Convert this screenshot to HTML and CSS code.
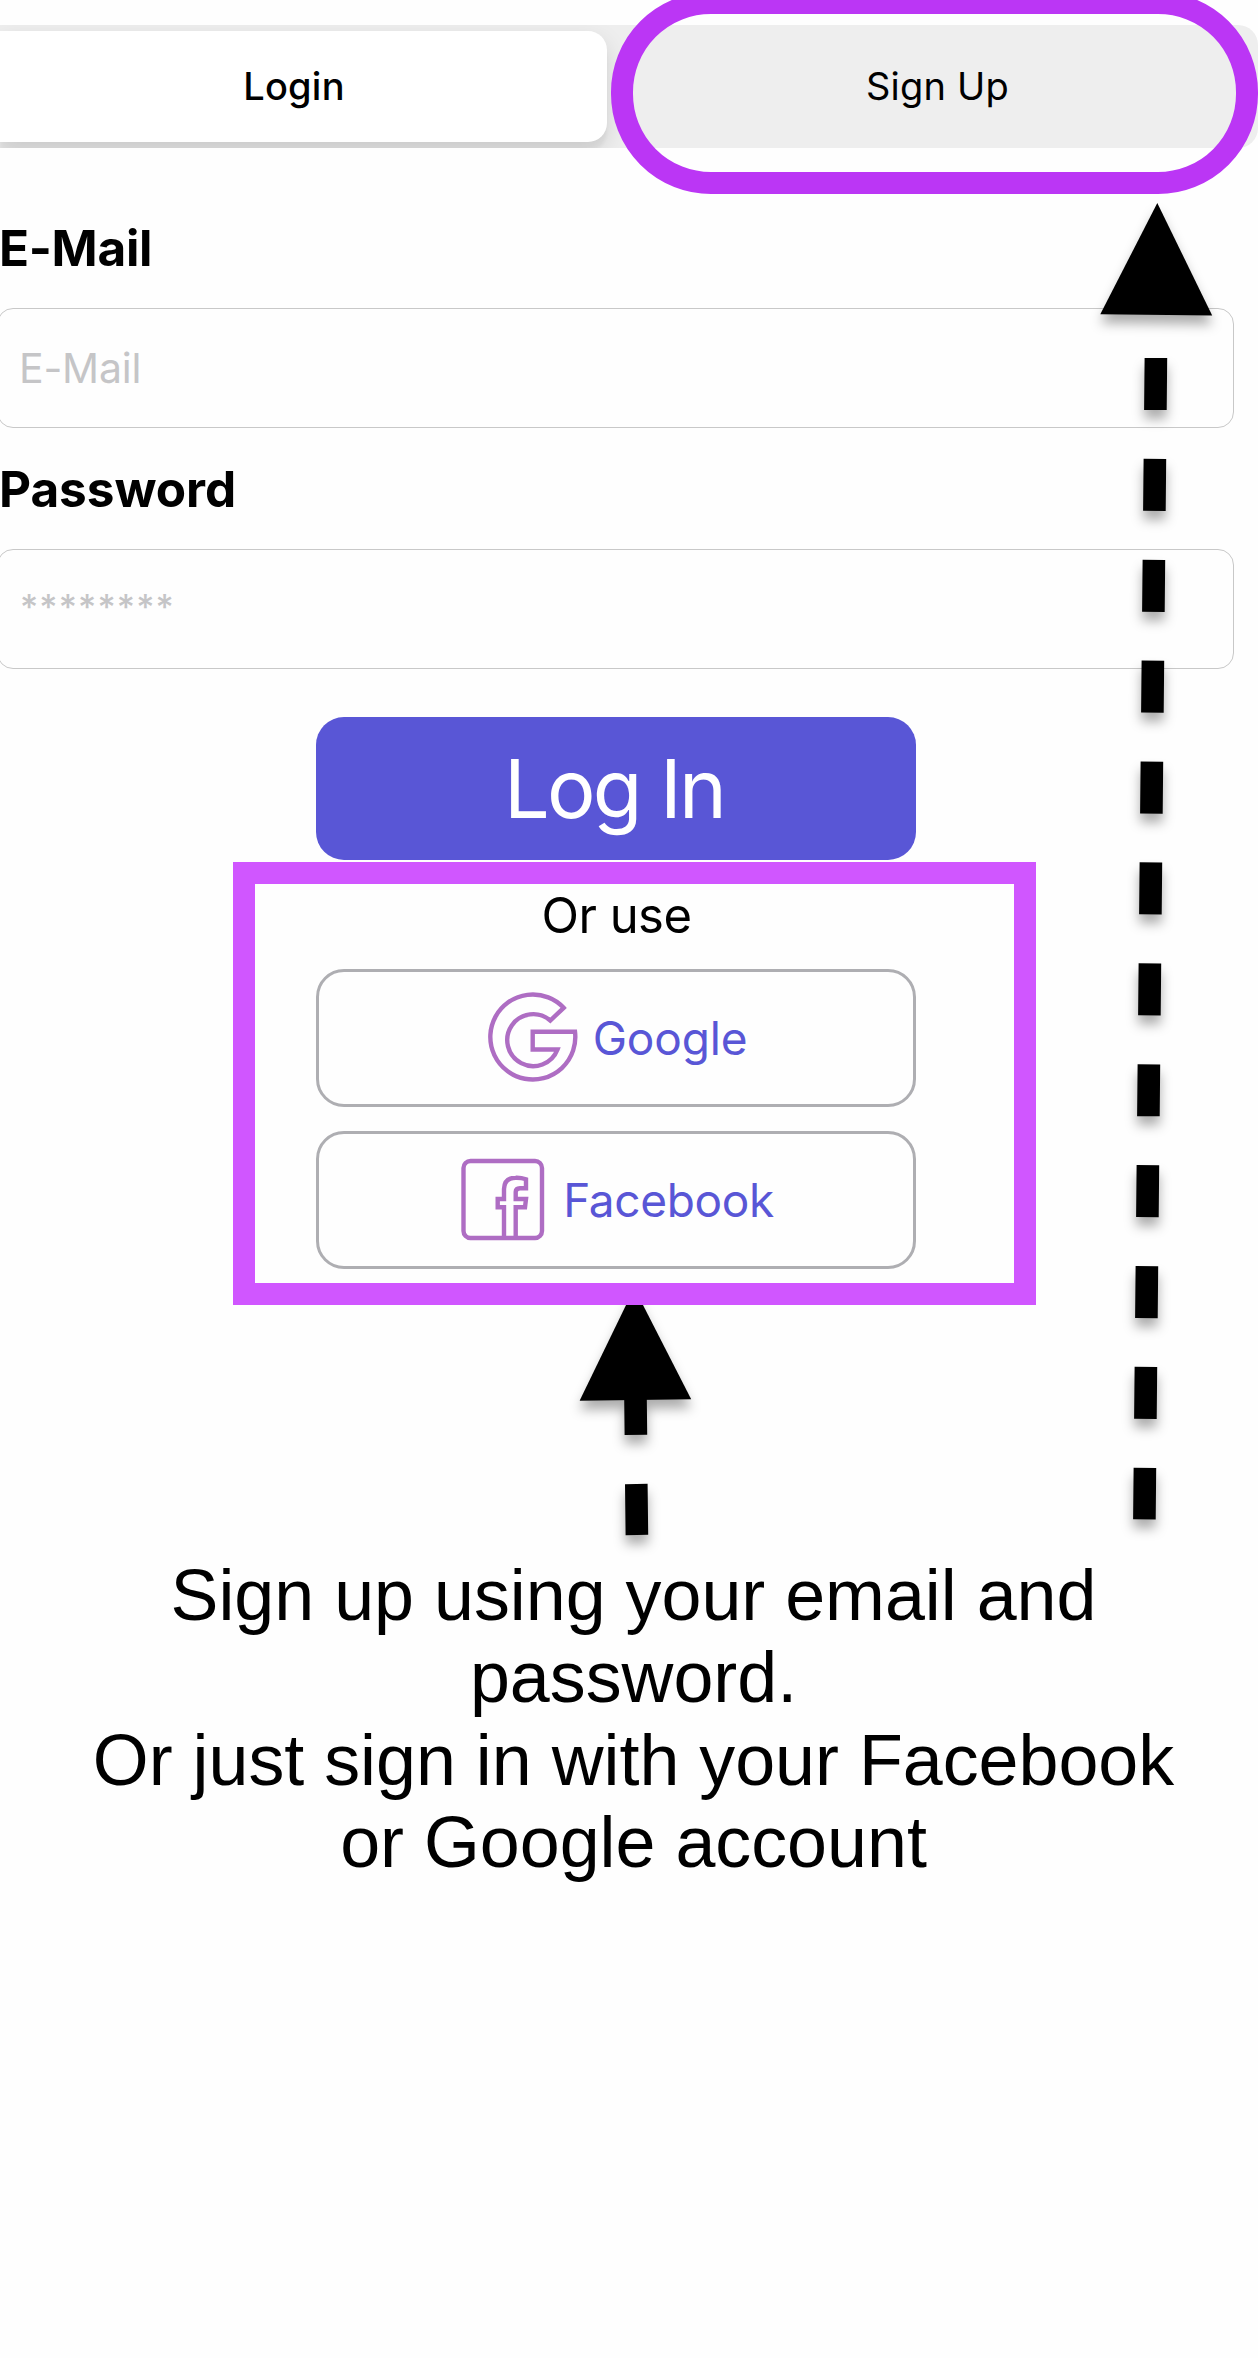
FILE: index.html
```html
<!DOCTYPE html>
<html lang="en">
<head>
<meta charset="utf-8">
<title>Login</title>
<link rel="stylesheet" href="styles.css">
</head>
<body>
<main class="page">
  <nav class="tabs">
    <div class="tab tab-active">Login</div>
    <div class="tab tab-signup">Sign Up</div>
  </nav>

  <form class="form">
    <label class="label label-email">E-Mail</label>
    <div class="field"><span class="placeholder">E-Mail</span></div>
    <label class="label label-password">Password</label>
    <div class="field"><span class="placeholder stars">********</span></div>
  </form>

  <section class="actions">
    <div class="login">Log In</div>
    <p class="or">Or use</p>
    <div class="social">
      <svg class="icon" viewBox="0 0 96 96"><path d="M78.700 17.800A42.500 42.500 0 1 0 90 41.800H47.700V59.500H72.500A26 26 0 1 1 65.300 30.500Z"/></svg>
      <span class="google">Google</span>
    </div>
    <div class="social social-facebook">
      <svg class="icon" viewBox="0 0 96 96"><rect x="8.500" y="9" width="78.500" height="77" rx="7"/><path d="M49 85V55.300H42.700V47H49V37Q49.500 25.700 60.700 25.700Q66 25.500 71 27.300V36.300H65Q60.700 36.500 60.700 40V47H71L70 55.300H60.700V85"/></svg>
      <span class="facebook">Facebook</span>
    </div>
  </section>

  <p class="caption">Sign up using your email and password.<br>Or just sign in with your Facebook or Google account</p>

  <svg class="arrows" viewBox="0 0 1258 2358">
    <g class="arrow">
      <path d="M1157.300 203L1212.200 315.500L1100.300 314.300Z"/>
      <path class="shaft shaft-long" d="M1155.900 358L1144.400 1519.300"/>
    </g>
    <g class="arrow">
      <path d="M634.300 1288L691.200 1399.300L579.600 1400.800Z"/>
      <path class="shaft" d="M635.400 1390L635.900 1434.800M636.300 1484L636.900 1535"/>
    </g>
  </svg>
  <div class="ring"></div>
  <div class="frame"></div>
</main>
</body>
</html>
```
FILE: styles.css
```css
* { box-sizing: border-box; }

body {
  margin: 0;
  background: #fefefe;
  color: #000;
  font-family: Inter, "Liberation Sans", sans-serif;
}

.page {
  position: relative;
  width: 1258px;
  height: 2358px;
  padding-top: 25px;
  overflow: hidden;
}

.tabs {
  display: flex;
  height: 123px;
  padding: 6px 6px 6px 0;
  background: #eee;
  border-radius: 0 20px 20px 0;
  overflow: hidden;
}

.tab {
  display: flex;
  align-items: center;
  justify-content: center;
  padding-bottom: 1px;
  font-size: 38px;
  letter-spacing: 0.2px;
}

.tab-active {
  width: 607px;
  padding-right: 19px;
  font-weight: 500;
  background: #fff;
  border-radius: 0 19px 19px 0;
  box-shadow: 0 9px 24px rgba(0, 0, 0, 0.12), 0 9px 3px rgba(0, 0, 0, 0.04);
}

.tab-signup { flex: 1; padding-left: 16px; }

.label {
  display: block;
  height: 60px;
  font-size: 49.5px;
  font-weight: 700;
  line-height: 60px;
}

.label-email { margin: 70px 0 30px -1px; letter-spacing: -0.3px; }
.label-password { margin: 31px 0 30px -1px; letter-spacing: -0.05px; }

.field {
  display: flex;
  align-items: center;
  width: 1237px;
  height: 120px;
  margin-left: -3px;
  padding-left: 21px;
  background: #fefefe;
  border: 1px solid #c8c8c8;
  border-radius: 16px;
}

.placeholder { color: #c5c5c7; font-size: 41px; letter-spacing: -0.2px; }
.stars { padding: 0 0 5px 1px; font-size: 35px; font-weight: 500; letter-spacing: 1.15px; }

.actions {
  display: flex;
  flex-direction: column;
  width: 600px;
  margin: 48px 0 0 316px;
}

.login {
  height: 143px;
  padding-right: 4px;
  border-radius: 28px;
  background: #5956d6;
  color: #fff;
  font-size: 81px;
  letter-spacing: -2.72px;
  line-height: 145px;
  text-align: center;
}

.or {
  margin: 26px 0 23px;
  padding-left: 1px;
  font-size: 49px;
  letter-spacing: -0.5px;
  line-height: 60px;
  text-align: center;
}

.social {
  display: flex;
  align-items: center;
  justify-content: center;
  gap: 12px;
  height: 138px;
  border: 3px solid #aeaeb2;
  border-radius: 28px;
  color: #5956d6;
  font-size: 46px;
}

.social-facebook { margin-top: 24px; padding-right: 3px; }
.google { letter-spacing: -0.17px; }
.facebook { letter-spacing: -0.36px; }

.icon {
  width: 96px;
  height: 96px;
  fill: none;
  stroke: #ae6dc3;
  stroke-width: 4.4;
}

.caption {
  width: 1102px;
  margin: 284.5px 0 0 82.5px;
  font-family: "Liberation Sans", Arial, sans-serif;
  font-size: 71.8px;
  line-height: 82.5px;
  text-align: center;
}

.arrows {
  position: absolute;
  top: 0;
  left: 0;
  width: 1258px;
  height: 2358px;
}

.arrow { filter: drop-shadow(0 9px 6px rgba(0, 0, 0, 0.32)); }

.shaft { stroke: #000; stroke-width: 22.6; }
.shaft-long { stroke-dasharray: 52 48.9; }

.ring {
  position: absolute;
  top: -8px;
  left: 610.5px;
  width: 647.5px;
  height: 202px;
  border: 22.5px solid #bb36f5;
  border-radius: 100px;
}

.frame {
  position: absolute;
  top: 862px;
  left: 232.5px;
  width: 803.5px;
  height: 443px;
  border: 22px solid #d056ff;
}
```
